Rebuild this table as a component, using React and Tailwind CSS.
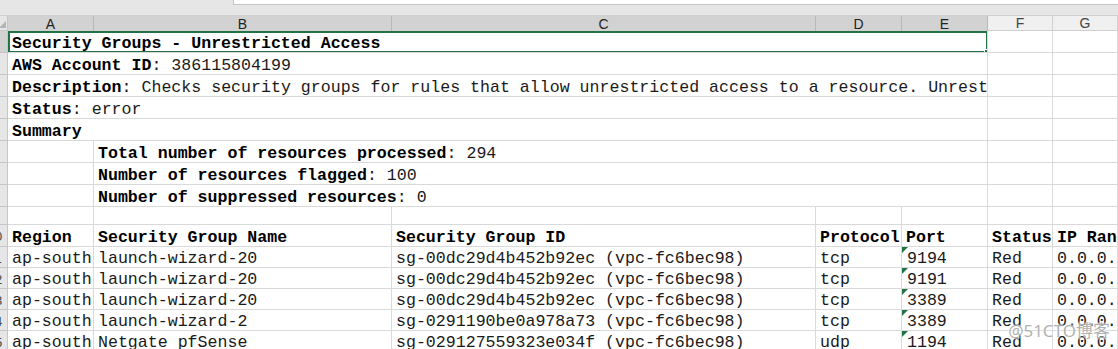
const cols = ['A', 'B', 'C', 'D', 'E', 'F', 'G'];

const mono = { fontFamily: '"Liberation Mono", "Courier New", monospace' };

const dataRows = [
  ['ap-south-1', 'launch-wizard-20', 'sg-00dc29d4b452b92ec (vpc-fc6bec98)', 'tcp', '9194', 'Red', '0.0.0.0/0'],
  ['ap-south-1', 'launch-wizard-20', 'sg-00dc29d4b452b92ec (vpc-fc6bec98)', 'tcp', '9191', 'Red', '0.0.0.0/0'],
  ['ap-south-1', 'launch-wizard-20', 'sg-00dc29d4b452b92ec (vpc-fc6bec98)', 'tcp', '3389', 'Red', '0.0.0.0/0'],
  ['ap-south-1', 'launch-wizard-2', 'sg-0291190be0a978a73 (vpc-fc6bec98)', 'tcp', '3389', 'Red', '0.0.0.0/0'],
  ['ap-south-1', 'Netgate pfSense', 'sg-029127559323e034f (vpc-fc6bec98)', 'udp', '1194', 'Red', '0.0.0.0/0'],
];

// row header is scrolled: only its right 8px show
function RowHead({ n, selected }) {
  return (
    <div
      className={`flex justify-end overflow-hidden border-r border-b border-[#c6c6c6] ${
        selected ? 'bg-[#d2d2d2]' : 'bg-[#e6e6e6]'
      }`}
    >
      <div
        className="flex w-[24px] shrink-0 items-center justify-center pt-[3px] text-[13px] text-[#444]"
        style={{ fontFamily: '"Liberation Sans", Arial, sans-serif' }}
      >
        {n}
      </div>
    </div>
  );
}

function Cell({ children, span = '', extra = '' }) {
  return (
    <div
      className={`relative flex items-center overflow-hidden whitespace-nowrap border-r border-b border-[#d9d9d9] pt-[5px] pl-1 text-[16.6px] leading-none text-[#1a1a1a] ${span} ${extra}`}
    >
      {children}
    </div>
  );
}

function Label({ b, v }) {
  return (
    <>
      <span className="font-bold text-black">{b}</span>
      {v !== undefined && <span>: {v}</span>}
    </>
  );
}

const grid = 'grid grid-cols-[8px_86px_298px_424px_86px_86px_65px_65px]';

export default function App() {
  const mergedTop = [
    { n: 1, content: <span className="font-bold text-black">Security Groups - Unrestricted Access</span> },
    { n: 2, content: <Label b="AWS Account ID" v="386115804199" /> },
    {
      n: 3,
      content: (
        <Label
          b="Description"
          v="Checks security groups for rules that allow unrestricted access to a resource. Unrestricted access increases opportunities for malicious activity."
        />
      ),
    },
    { n: 4, content: <Label b="Status" v="error" /> },
    { n: 5, content: <Label b="Summary" /> },
  ];

  const summary = [
    { n: 6, b: 'Total number of resources processed', v: '294' },
    { n: 7, b: 'Number of resources flagged', v: '100' },
    { n: 8, b: 'Number of suppressed resources', v: '0' },
  ];

  return (
    <div className="relative h-[349px] w-[1118px] overflow-hidden bg-white" style={mono}>
      {/* formula bar edge */}
      <div className="flex h-[15px] bg-[#e6e6e6]">
        <div className="w-[233px]" />
        <div className="h-[5px] flex-1 border-b border-l border-[#c6c6c6] bg-white" />
      </div>

      {/* column headers */}
      <div
        className={`${grid} h-[16px] border-t border-[#d0d0d0] text-[14px] leading-none text-[#444]`}
        style={{ fontFamily: '"Liberation Sans", Arial, sans-serif' }}
      >
        <div className="relative border-r border-b border-[#c6c6c6] bg-[#e6e6e6]">
          <div className="absolute right-[1px] bottom-[2px] h-0 w-0 border-b-[7px] border-l-[7px] border-b-[#b4b4b4] border-l-transparent" />
        </div>
        {cols.map((c, i) => (
          <div
            key={c}
            className={`flex items-center justify-center border-r ${
              i < 5 ? 'border-[#b8b8b8] bg-[#d2d2d2] text-[#222]' : 'border-b border-[#d0d0d0] bg-[#f0f0f0]'
            }`}
          >
            {c}
          </div>
        ))}
      </div>

      {/* merged info rows */}
      {mergedTop.map((r) => (
        <div key={r.n} className={`${grid} h-[22px]`}>
          <RowHead n={r.n} selected={r.n === 1} />
          <Cell span="col-span-5">
            {r.content}
            {r.n === 1 && (
              <>
                <div className="absolute top-0 right-[-1px] bottom-[-1px] left-0 border-2 border-[#217346]" />
                <div className="absolute right-[-3px] bottom-[-3px] h-[6px] w-[6px] border border-white bg-[#217346]" />
              </>
            )}
          </Cell>
          <Cell />
          <Cell />
        </div>
      ))}

      {/* summary rows */}
      {summary.map((r) => (
        <div key={r.n} className={`${grid} h-[22px]`}>
          <RowHead n={r.n} />
          <Cell />
          <Cell span="col-span-4">
            <Label b={r.b} v={r.v} />
          </Cell>
          <Cell />
          <Cell />
        </div>
      ))}

      {/* empty row */}
      <div className={`${grid} h-[18px]`}>
        <RowHead n={9} />
        {cols.map((c) => (
          <Cell key={c} />
        ))}
      </div>

      {/* table header */}
      <div className={`${grid} h-[22px]`}>
        <RowHead n={10} />
        {['Region', 'Security Group Name', 'Security Group ID', 'Protocol', 'Port', 'Status', 'IP Range'].map((h) => (
          <Cell key={h} extra="font-bold text-black">
            {h}
          </Cell>
        ))}
      </div>

      {/* data rows */}
      {dataRows.map((row, ri) => (
        <div key={ri} className={`${grid} h-[21px]`}>
          <RowHead n={11 + ri} />
          {row.map((v, ci) => (
            <Cell key={ci} extra={ci === 4 ? 'pl-[5px]' : ''}>
              {ci === 4 && (
                <div className="absolute top-0 left-0 h-0 w-0 border-t-[6px] border-r-[6px] border-t-[#217346] border-r-transparent" />
              )}
              {v}
            </Cell>
          ))}
        </div>
      ))}

      {/* watermark */}
      <div
        className="absolute right-[8px] bottom-[6px] text-[17px] text-[rgba(150,150,150,0.75)]"
        style={{
          fontFamily: '"Noto Sans", "Noto Sans CJK SC", sans-serif',
          textShadow: '0 0 2px #fff, 0 0 2px #fff',
        }}
      >
        @51CTO博客
      </div>
    </div>
  );
}
